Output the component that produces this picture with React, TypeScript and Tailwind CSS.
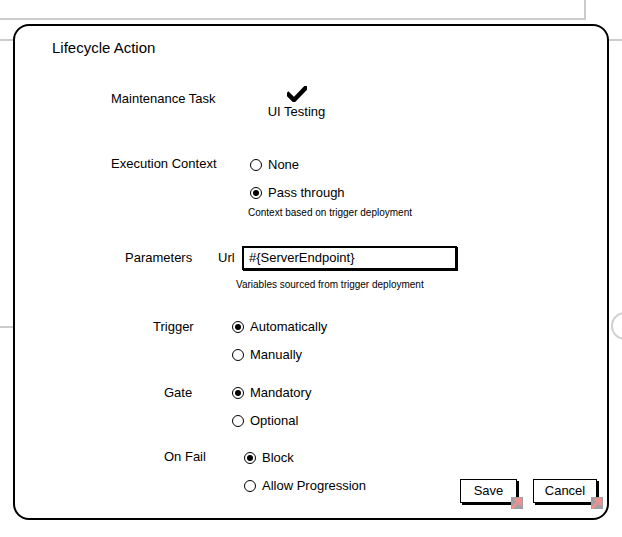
import React from 'react';

const font = { fontFamily: '"Liberation Sans", Arial, sans-serif' };

function Radio({ checked, label }: { checked?: boolean; label: string }) {
  return (
    <div className="flex items-center h-5 gap-[6px]">
      <span className="w-[12px] h-[12px] rounded-full border-[1.5px] border-black flex items-center justify-center">
        {checked && <span className="w-[6px] h-[6px] rounded-full bg-black" />}
      </span>
      <span>{label}</span>
    </div>
  );
}

function LinkMark() {
  return (
    <svg className="absolute -right-[7px] -bottom-[7px]" width="12" height="12" viewBox="0 0 12 12">
      <rect x="0" y="0" width="12" height="12" fill="#a0a0a0" />
      <path d="M1 12 L1 9 L6 4 L3.5 4 L3.5 1 L11 1 L11 8.5 L8 8.5 L8 6 L3 11 L3 12 Z" fill="#ef8f8f" />
    </svg>
  );
}

function Button({ label, width }: { label: string; width: string }) {
  return (
    <div
      className={`relative ${width} h-[24px] bg-white border border-black shadow-[2px_2px_0_#000] flex items-center justify-center text-[13px]`}
    >
      {label}
      <LinkMark />
    </div>
  );
}

export default function App() {
  return (
    <div className="relative w-[622px] h-[537px] overflow-hidden bg-white text-black" style={font}>
      {/* background canvas pieces */}
      <div className="absolute -left-[10px] -top-[10px] w-[596px] h-[30px] border-2 border-[#cccccc] bg-white" />
      <div className="absolute left-0 top-[39px] w-[14px] h-[2px] bg-[#cccccc]" />
      <div className="absolute left-[608px] top-[39px] w-[14px] h-[2px] bg-[#cccccc]" />
      <div className="absolute left-0 top-[326px] w-[14px] h-[2px] bg-[#cccccc]" />
      <div className="absolute left-[611px] top-[312px] w-[28px] h-[28px] rounded-full border-2 border-[#d0d0d0] bg-white" />

      <div className="relative ml-[13px] mt-[24px] w-[596px] h-[496px] border-2 border-black rounded-[16px] bg-white flex flex-col text-[13px]">
        <div className="h-[44px] flex items-center pl-[37px] text-[15px]">Lifecycle Action</div>

        <div className="mt-[16px] flex items-start pl-[96px]">
          <div className="w-[155px] mt-[3px] leading-5">Maintenance Task</div>
          <div className="flex flex-col items-center w-[61px]">
            <svg width="20" height="16" viewBox="0 0 20 16">
              <path d="M1.5 8.5 L7 14 L18.5 2" fill="none" stroke="#000" strokeWidth="4.5" strokeLinecap="square" />
            </svg>
            <div className="leading-5">UI Testing</div>
          </div>
        </div>

        <div className="mt-[32px] flex items-start pl-[96px]">
          <div className="w-[139px] leading-5">Execution Context</div>
          <div className="flex flex-col">
            <div className="mt-[1px]">
              <Radio label="None" />
            </div>
            <div className="mt-[8px]">
              <Radio checked label="Pass through" />
            </div>
            <div className="mt-[3px] -ml-[2px] text-[10px] leading-[14px]">Context based on trigger deployment</div>
          </div>
        </div>

        <div className="mt-[26px] flex items-center pl-[110px] h-[24px]">
          <div className="w-[93px]">Parameters</div>
          <div className="w-[24px]">Url</div>
          <div className="w-[215px] h-[24px] border-2 border-black shadow-[1px_1px_0_#000] flex items-center pl-[5px]">
            #{'{'}ServerEndpoint{'}'}
          </div>
        </div>
        <div className="mt-[8px] pl-[221px] text-[10px] leading-[14px]">Variables sourced from trigger deployment</div>

        <div className="mt-[25px] flex items-start pl-[138px]">
          <div className="w-[79px] leading-5">Trigger</div>
          <div className="flex flex-col gap-[8px]">
            <Radio checked label="Automatically" />
            <Radio label="Manually" />
          </div>
        </div>

        <div className="mt-[18px] flex items-start pl-[149px]">
          <div className="w-[68px] leading-5">Gate</div>
          <div className="flex flex-col gap-[8px]">
            <Radio checked label="Mandatory" />
            <Radio label="Optional" />
          </div>
        </div>

        <div className="mt-[16px] flex items-start pl-[149px] pr-[10px]">
          <div className="w-[80px] leading-5">On Fail</div>
          <div className="flex flex-col gap-[8px] mt-[1px]">
            <Radio checked label="Block" />
            <Radio label="Allow Progression" />
          </div>
          <div className="ml-auto mt-[32px] flex gap-[16px]">
            <Button label="Save" width="w-[57px]" />
            <Button label="Cancel" width="w-[64px]" />
          </div>
        </div>
      </div>
    </div>
  );
}
